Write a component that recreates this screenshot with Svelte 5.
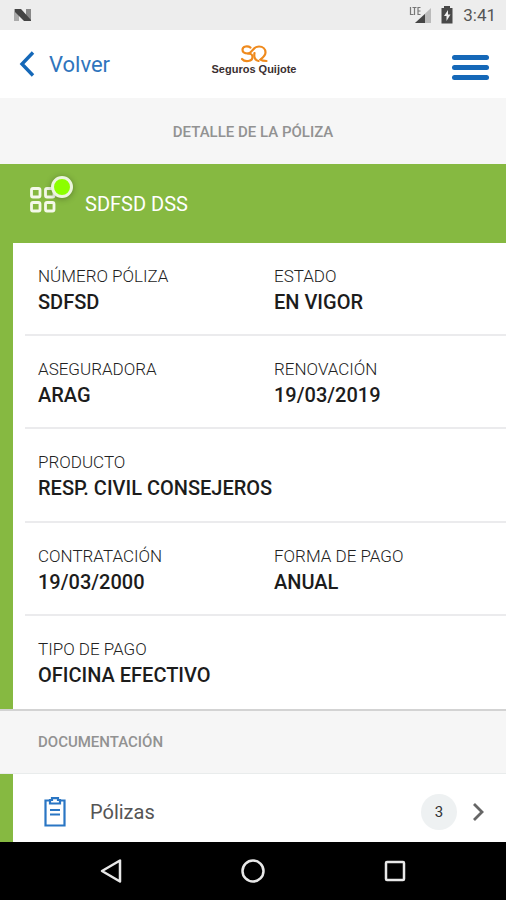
<script>
  const policy = {
    name: "SDFSD DSS",
    rows: [
      [
        { label: "NÚMERO PÓLIZA", value: "SDFSD" },
        { label: "ESTADO", value: "EN VIGOR" }
      ],
      [
        { label: "ASEGURADORA", value: "ARAG" },
        { label: "RENOVACIÓN", value: "19/03/2019" }
      ],
      [{ label: "PRODUCTO", value: "RESP. CIVIL CONSEJEROS" }],
      [
        { label: "CONTRATACIÓN", value: "19/03/2000" },
        { label: "FORMA DE PAGO", value: "ANUAL" }
      ],
      [{ label: "TIPO DE PAGO", value: "OFICINA EFECTIVO" }]
    ]
  };

  const documents = [{ title: "Pólizas", count: 3 }];
</script>

<div class="screen">
  <div class="status">
    <svg width="20" height="14" viewBox="0 0 20 14" aria-hidden="true">
      <path d="M1 1h5v12H1z" fill="#aaa" />
      <path d="M13 1h5v12h-5z" fill="#888" />
      <path d="M2 1h6l10 11v1h-7L2 4z" fill="#444" />
    </svg>
    <div class="status-right">
      <svg width="22" height="18" viewBox="0 0 22 18" aria-hidden="true">
        <g fill="none" stroke="#777" stroke-width="1.200">
          <path d="M1.500 1v7.500h3M3.500 1.500h4M5.500 1.500V9M11.500 1.500H9v7h2.500M9 5h2.500" />
        </g>
        <path d="M22 2v15H6z" fill="#bbb" />
        <path d="M16 8v9H6z" fill="#444" />
      </svg>
      <svg width="12" height="18" viewBox="0 0 12 18" aria-hidden="true">
        <path d="M3 0h6v2h2.500v15.500H.5V2H3z" fill="#484848" />
        <path d="M7 4L3 10h2.500v5L9.500 8.500H7z" fill="#eee" />
      </svg>
      <span>3:41</span>
    </div>
  </div>

  <header>
    <a class="back" href="#volver">
      <svg width="16" height="26" viewBox="0 0 16 26" aria-hidden="true">
        <path d="M14 1.500L3 13l11 11.500" fill="none" stroke="#1568b8" stroke-width="3.400" />
      </svg>
      Volver
    </a>
    <div class="brand">
      <svg width="28" height="18" viewBox="0 0 28 18" aria-hidden="true">
        <g fill="none" stroke="#ef8a1d" stroke-width="2.200" stroke-linecap="round">
          <path d="M10.500 2.600C8 .6 2.500 1 2.500 4.800c0 3.700 3.500 3.700 5.500 3.700 3.500 0 4.500 1.500 4.500 3.500 0 4.500-7.500 5.500-10.500 2" />
          <path d="M8 8.500c4.500 0 4-7 11-7 4 0 6.500 2.700 6.500 5.800 0 3.700-2.500 5.200-5 7.200 2 1.500 3.500 1.500 6 1.500" />
          <path d="M14.500 8c-.8 4 .5 7.500 4 8" />
        </g>
      </svg>
      <span>Seguros Quijote</span>
    </div>
    <button class="menu" aria-label="Menú">
      <i></i>
      <i></i>
      <i></i>
    </button>
  </header>

  <main>
    <h1>DETALLE DE LA PÓLIZA</h1>

    <section class="policy">
      <div class="policy-head">
        <div class="policy-icon">
          <svg width="26" height="26" viewBox="0 0 26 26" aria-hidden="true">
            <g fill="none" stroke="#f4f9ea" stroke-width="2.800">
              <rect x="1.500" y="1.500" width="8.500" height="8.500" rx="1.500" />
              <rect x="15.500" y="1.500" width="8.500" height="8.500" rx="1.500" />
              <rect x="1.500" y="15.500" width="8.500" height="8.500" rx="1.500" />
              <rect x="15.500" y="15.500" width="8.500" height="8.500" rx="1.500" />
            </g>
          </svg>
          <span class="dot"></span>
        </div>
        <h2>{policy.name}</h2>
      </div>

      <div class="rows">
        {#each policy.rows as row}
          <dl>
            {#each row as field}
              <div class:wide={row.length === 1}>
                <dt>{field.label}</dt>
                <dd>{field.value}</dd>
              </div>
            {/each}
          </dl>
        {/each}
      </div>
    </section>

    <h3>DOCUMENTACIÓN</h3>

    {#each documents as doc}
      <a class="doc" href="#polizas">
        <svg width="22" height="30" viewBox="0 0 22 30" aria-hidden="true">
          <g fill="none" stroke="#2a76c4" stroke-width="2.200">
            <path d="M6 3.500H1.500v25h19v-25H16" />
            <path d="M6 6.500V3h2V1.200h6V3h2v3.500z" />
            <path d="M6 13h10M6 17.500h10" />
          </g>
        </svg>
        <span class="title">{doc.title}</span>
        <span class="count">{doc.count}</span>
        <svg width="12" height="20" viewBox="0 0 12 20" aria-hidden="true">
          <path d="M2 2l8 8-8 8" fill="none" stroke="#666" stroke-width="2.800" />
        </svg>
      </a>
    {/each}
  </main>

  <nav>
    <button aria-label="Atrás">
      <svg width="24" height="26" viewBox="0 0 24 26">
        <path d="M21 2.500v21L3 13z" />
      </svg>
    </button>
    <button aria-label="Inicio">
      <svg width="24" height="26" viewBox="0 0 24 26">
        <circle cx="12" cy="13" r="10.500" />
      </svg>
    </button>
    <button aria-label="Recientes">
      <svg width="24" height="26" viewBox="0 0 24 26">
        <rect x="3" y="4" width="18" height="18" rx="1" />
      </svg>
    </button>
  </nav>
</div>

<style>
  :global(body) {
    background: #f6f6f6;
  }

  .screen {
    display: flex;
    flex-direction: column;
    min-height: 100vh;
    font-family: Roboto, "Liberation Sans", sans-serif;
    color: #222;
  }

  h1,
  h2,
  h3,
  dl,
  dd {
    margin: 0;
  }

  a {
    text-decoration: none;
  }

  button {
    border: 0;
    padding: 0;
    background: none;
    cursor: pointer;
  }

  .status {
    display: flex;
    align-items: center;
    justify-content: space-between;
    height: 30px;
    padding: 0 10px 0 13px;
    background: #ededed;
  }

  .status-right {
    display: flex;
    align-items: center;
    gap: 10px;
    font-size: 17px;
    color: #555;
  }

  header {
    display: grid;
    grid-template-columns: 1fr auto 1fr;
    align-items: center;
    height: 68px;
    padding: 0 17px 0 19px;
    background: #fff;
  }

  .back {
    display: flex;
    align-items: center;
    gap: 14px;
    font-size: 22px;
    color: #2f75bd;
  }

  .brand {
    display: flex;
    flex-direction: column;
    align-items: center;
    padding-bottom: 8px;
    font: bold 11px/13px "Liberation Sans", sans-serif;
    color: #3b2f30;
  }

  .menu {
    display: flex;
    flex-direction: column;
    justify-self: end;
    gap: 5px;
    padding-top: 6px;
  }

  .menu i {
    width: 37px;
    height: 5px;
    border-radius: 3px;
    background: #1568b8;
  }

  main {
    flex: 1;
  }

  h1,
  h3 {
    font-size: 15px;
    font-weight: 500;
    color: #929292;
  }

  h1 {
    padding-top: 2px;
    line-height: 64px;
    text-align: center;
  }

  .policy {
    border-bottom: 2px solid #d3d3d3;
    background: #86b941;
  }

  .policy-head {
    display: flex;
    align-items: center;
    gap: 29px;
    height: 79px;
    padding-left: 30px;
  }

  .policy-icon {
    position: relative;
    height: 34px;
  }

  .dot {
    position: absolute;
    top: -11px;
    left: 21px;
    width: 16px;
    height: 16px;
    border: 3px solid #ecf5dd;
    border-radius: 50%;
    background: #8cff00;
    box-shadow: 0 1px 6px rgba(0, 0, 0, 0.3);
  }

  h2 {
    font-size: 20px;
    font-weight: 400;
    color: #fff;
  }

  .rows {
    display: grid;
    grid-auto-rows: 1fr;
    min-height: 466px;
    margin-left: 13px;
    padding-left: 12px;
    box-sizing: border-box;
    background: #fff;
  }

  dl {
    display: grid;
    grid-template-columns: 1fr 1fr;
    column-gap: 4px;
    padding: 20px 0 19px 13px;
    border-bottom: 2px solid #ebebed;
  }

  dl:last-child {
    border-bottom: 0;
  }

  .wide {
    grid-column: 1 / -1;
  }

  dt {
    font-size: 17px;
    font-weight: 300;
    line-height: 26px;
    color: #222;
  }

  dd {
    font-size: 20px;
    font-weight: 500;
    line-height: 26px;
    color: #1c1c1c;
  }

  h3 {
    padding-left: 38px;
    line-height: 62px;
    border-bottom: 1px solid #e9ecec;
  }

  .doc {
    display: flex;
    align-items: center;
    height: 68px;
    box-sizing: border-box;
    padding: 8px 22px 0 31px;
    border-left: 13px solid #86b941;
    background: #fff;
    color: #555;
  }

  .doc .title {
    flex: 1;
    padding-left: 24px;
    font-size: 20px;
  }

  .count {
    width: 36px;
    margin-right: 15px;
    border-radius: 50%;
    background: #eef1f2;
    font-size: 15px;
    line-height: 36px;
    text-align: center;
    color: #333;
  }

  nav {
    display: grid;
    grid-template-columns: repeat(3, 142px);
    justify-content: center;
    height: 58px;
    background: #000;
  }

  nav svg {
    display: block;
    margin: 0 auto;
    fill: none;
    stroke: #e8e8e8;
    stroke-width: 2.5px;
    stroke-linejoin: round;
  }
</style>
